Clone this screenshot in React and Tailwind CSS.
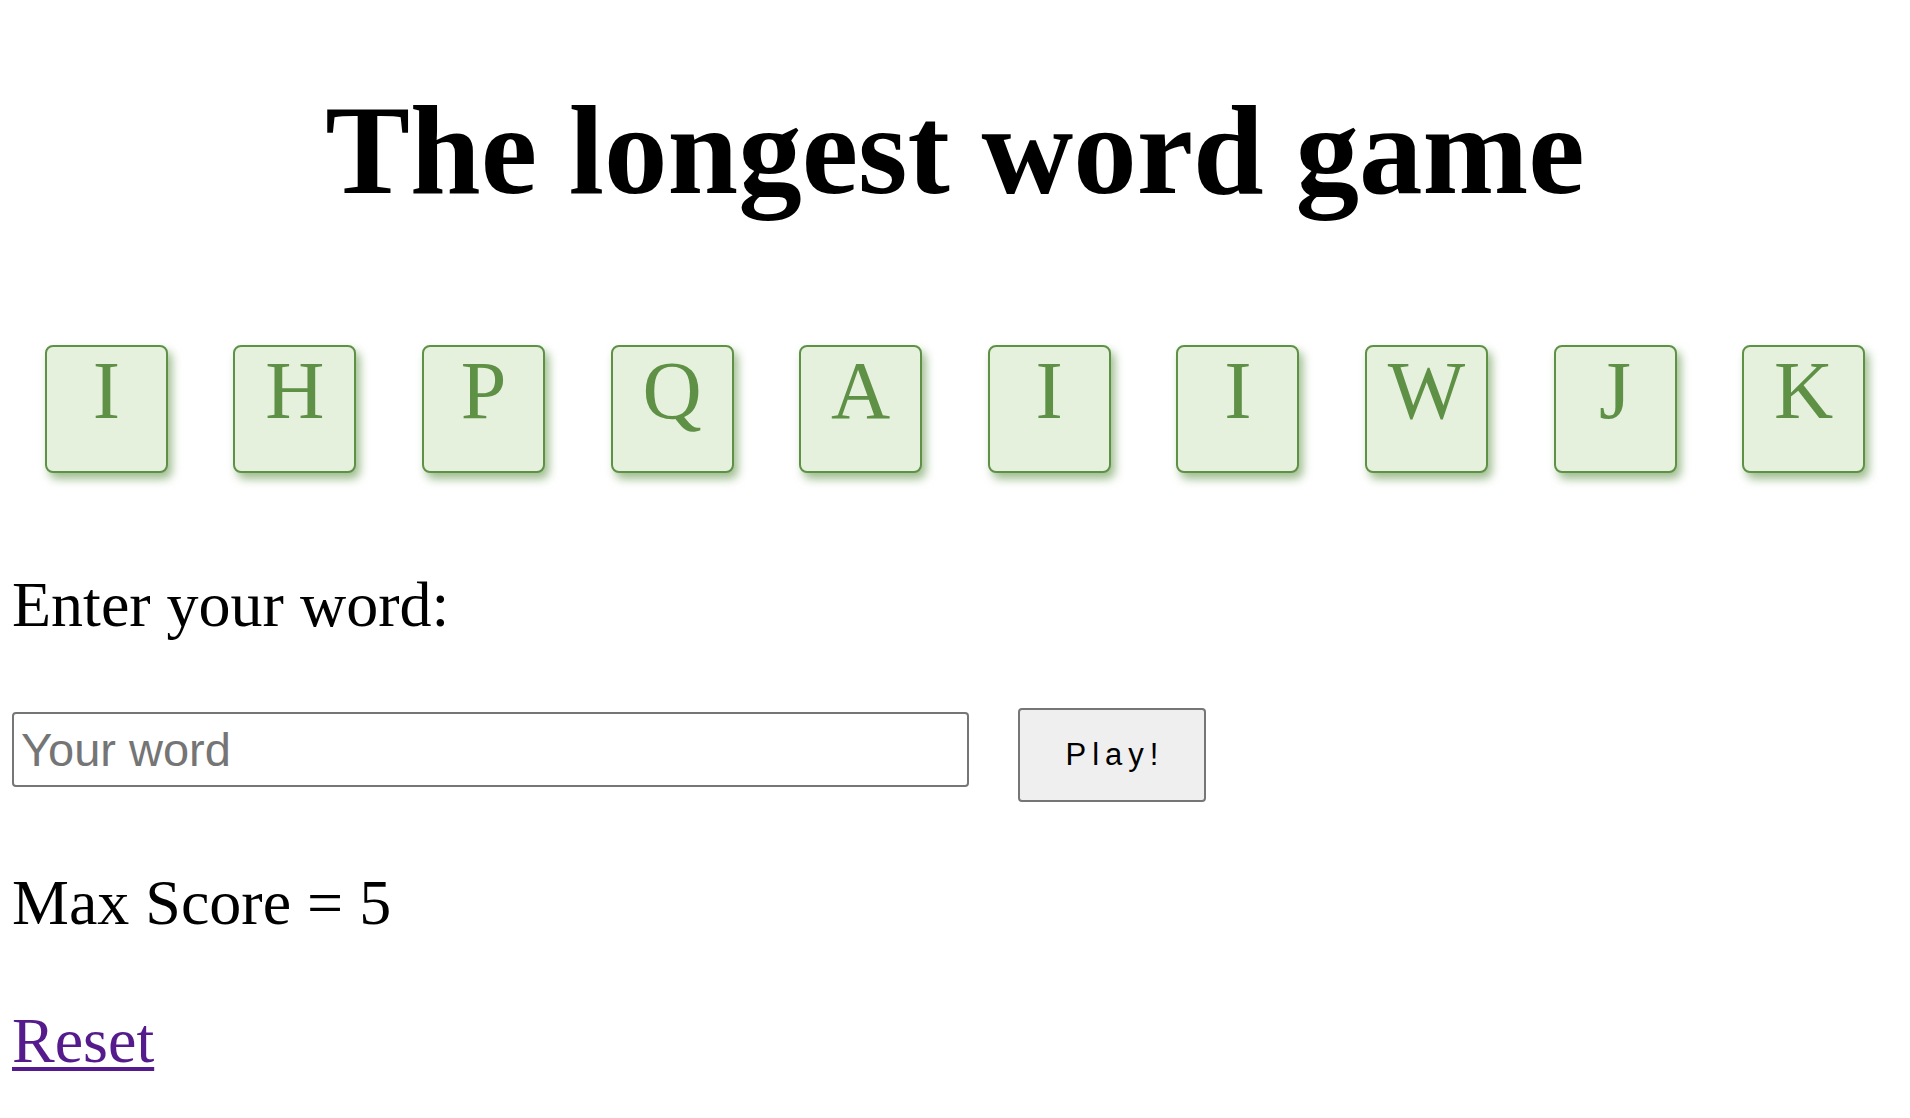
import React from 'react';

const letters = ['I', 'H', 'P', 'Q', 'A', 'I', 'I', 'W', 'J', 'K'];

// Single letter tile
const Tile = ({ letter }) => (
  <div className="w-[123px] h-[128px] rounded-[8px] border-2 border-[#5e9145] bg-[#e5f0dd] shadow-[4px_6px_10px_rgba(94,145,69,0.6)] text-center pt-[3px]">
    <span className="block text-[82px] leading-none text-[#5e9145]">{letter}</span>
  </div>
);

export default function App() {
  return (
    <div className="min-h-screen bg-white px-[12px] pb-10 text-black font-['Liberation_Serif','Times_New_Roman',serif]">
      <h1 className="pt-[87px] text-center text-[127px] leading-none font-bold">
        The longest word game
      </h1>

      <div className="mt-[131px] flex justify-around">
        {letters.map((l, i) => (
          <Tile key={i} letter={l} />
        ))}
      </div>

      <p className="mt-[100px] text-[64px] leading-none">Enter your word:</p>

      <div className="mt-[71px] flex items-start gap-[49px]">
        <input
          type="text"
          placeholder="Your word"
          className="mt-[4px] w-[957px] h-[75px] rounded-[4px] border-2 border-[#767676] px-[7px] text-[47px] font-['Liberation_Sans',Arial,sans-serif] placeholder-[#757575] outline-none"
        />
        <button className="w-[188px] h-[94px] rounded-[4px] border-2 border-[#767676] bg-[#efefef] text-[31px] tracking-[6px] pl-[6px] font-['Liberation_Sans',Arial,sans-serif] text-black">
          Play!
        </button>
      </div>

      <p className="mt-[69px] text-[64px] leading-none">Max Score = 5</p>

      <a
        href="#"
        className="mt-[74px] inline-block text-[64px] leading-none text-[#551a8b] underline decoration-[4px] underline-offset-[5px]"
      >
        Reset
      </a>
    </div>
  );
}
